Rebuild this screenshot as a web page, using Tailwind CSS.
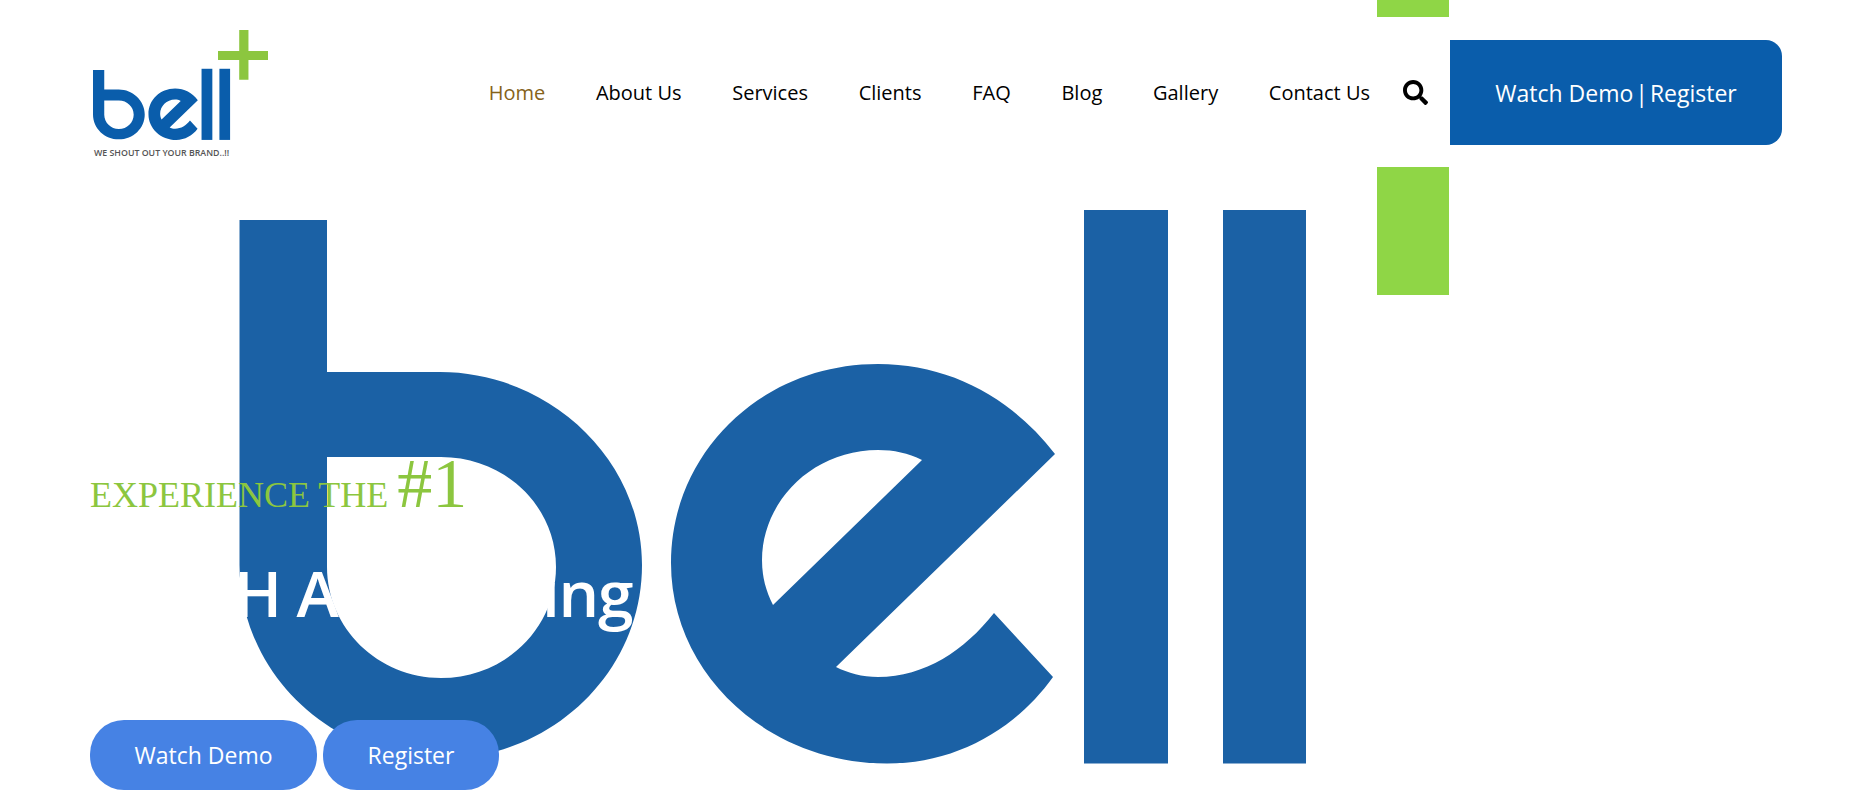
<!DOCTYPE html>
<html lang="en">
  <head>
    <meta charset="UTF-8" />
    <meta name="viewport" content="width=device-width, initial-scale=1.0" />
    <title>Bell</title>
    <script src="https://cdn.jsdelivr.net/npm/@tailwindcss/browser@4"></script>
  </head>
  <body class="bg-white h-[806px] w-[1866px] overflow-hidden relative font-['Open_Sans',sans-serif]">
    <!-- Big logo behind everything -->
    <svg class="absolute left-0 top-0 blur-[0.6px]" width="1866" height="806" viewBox="0 0 1866 806">
      <defs>
        <g id="bell-letters">
          <path fill-rule="evenodd" d="M239.5 220H327V372H440C548 372 642 458 642 565C642 672 552 759 440 759C330 759 239.5 672 239.5 565ZM327 457H441C505 457 556 506 556 567C556 628 505 678 441 678C378 678 327 628 327 567Z" />
          <path fill-rule="evenodd" d="M1055 454C1012 398 950 364 878 364C762 364 671 452 671 563C671 674 768 763.5 887 763.5C955 763.5 1015 730 1053 677L994 613C965 650 925 677 878 677C862 677 848 673 836 667ZM922 460C908 453 894 450 878 450C812 450 762 502 762 560C762 577 766 591 773 605Z" />
          <rect x="1084" y="210" width="84" height="553.5" />
          <rect x="1223" y="210" width="83" height="553.5" />
        </g>
        <path id="bell-plus" d="M1377 -91H1449V72H1601V142H1449V295H1377V142H1212V72H1377Z" />
      </defs>
      <use href="#bell-letters" fill="#1b61a5" />
      <use href="#bell-plus" fill="#8fd646" />
    </svg>

    <header class="relative z-10 mt-[17px] h-[150px] bg-white flex items-center pl-[93px] pr-[84px]">
      <div class="self-start pt-[13px]">
        <svg class="block blur-[0.4px]" width="175" height="110" viewBox="239.5 -91 1361.5 854.5">
          <use href="#bell-letters" fill="#0a5dab" />
          <use href="#bell-plus" fill="#8cc63f" />
        </svg>
        <p class="mt-[8px] ml-[1px] text-[8.8px] leading-[10px] font-semibold text-[#555] whitespace-nowrap">WE SHOUT OUT YOUR BRAND..!!</p>
      </div>
      <nav class="ml-auto mt-[2px] flex items-center gap-[50.7px] text-[20px] text-black">
        <a class="text-[#86631a]">Home</a>
        <a>About Us</a>
        <a>Services</a>
        <a>Clients</a>
        <a>FAQ</a>
        <a>Blog</a>
        <a>Gallery</a>
        <a>Contact Us</a>
      </nav>
      <svg class="ml-[33px] mr-[22px]" width="25" height="25" viewBox="0 0 512 512" fill="#000">
        <path d="M505 442.7L405.3 343c-4.5-4.5-10.6-7-17-7H372c27.6-35.3 44-79.7 44-128C416 93.1 322.9 0 208 0S0 93.1 0 208s93.1 208 208 208c48.3 0 92.7-16.4 128-44v16.3c0 6.4 2.5 12.5 7 17l99.7 99.7c9.4 9.4 24.6 9.4 33.9 0l28.3-28.3c9.4-9.4 9.4-24.6.1-34zM208 336c-70.7 0-128-57.2-128-128 0-70.7 57.2-128 128-128 70.7 0 128 57.2 128 128 0 70.7-57.2 128-128 128z" />
      </svg>
      <a class="w-[332px] h-[105px] pt-[2px] flex items-center justify-center bg-[#0a5dab] text-white text-[23px] rounded-r-[16px] whitespace-nowrap"><span>Watch Demo<span class="[word-spacing:-4px]"> | </span>Register</span></a>
    </header>

    <main class="relative pl-[90px] pt-[287px]">
      <p class="font-['Liberation_Serif',serif] text-[#8cc63f] text-[36px] leading-[60px] whitespace-nowrap">EXPERIENCE THE <span class="text-[70px]">#1</span></p>
      <h1 class="mt-[28px] text-white font-semibold text-[64px] tracking-[-1.2px] leading-[80px] whitespace-nowrap">DOOH Advertising</h1>
      <div class="mt-[87px] flex gap-[6px]">
        <a class="w-[227px] h-[70px] flex items-center justify-center rounded-[34px] bg-[#4682e4] text-white text-[23px]">Watch Demo</a>
        <a class="w-[176px] h-[70px] flex items-center justify-center rounded-[34px] bg-[#4682e4] text-white text-[23px]">Register</a>
      </div>
    </main>
  </body>
</html>
